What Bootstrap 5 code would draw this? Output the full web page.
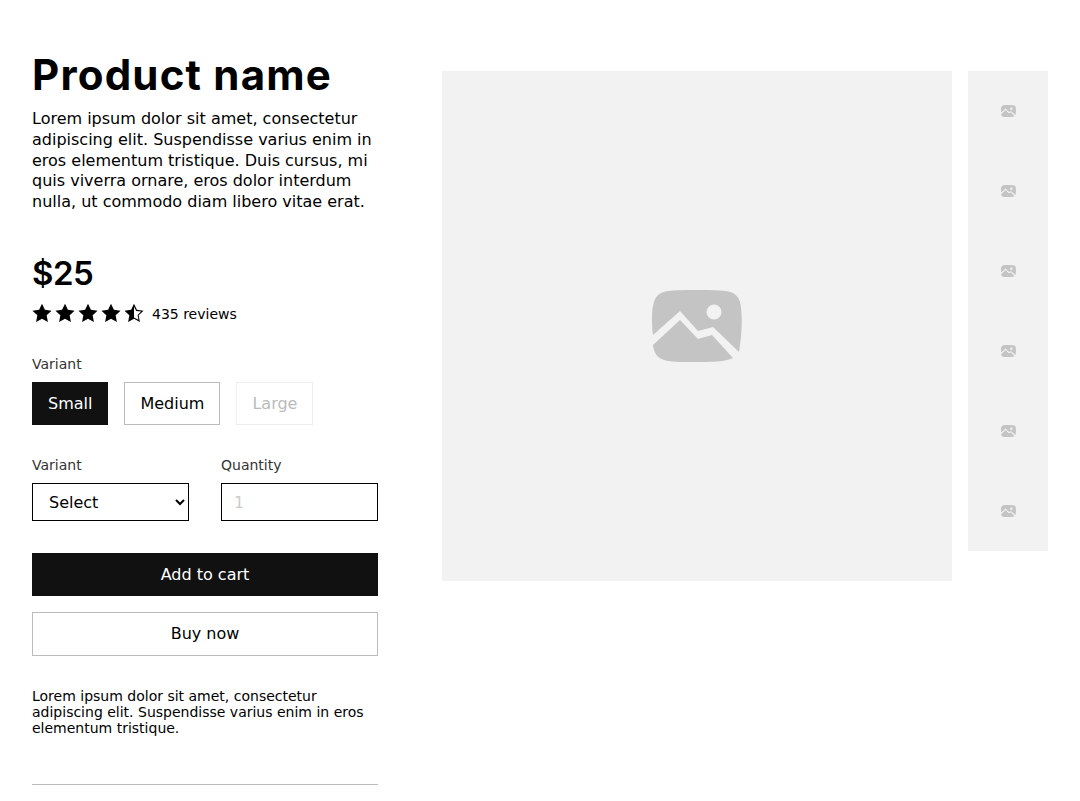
<!DOCTYPE html>
<html lang="en">
<head>
  <meta charset="UTF-8" />
  <meta name="viewport" content="width=device-width, initial-scale=1.0"/>
  <title>Product name</title>
  <link rel="stylesheet" href="https://cdn.jsdelivr.net/npm/bootstrap@5.3.0/dist/css/bootstrap.min.css"/>
  <style>
    body {
      font-family: "DejaVu Sans", sans-serif;
      color: #000;
      background: #fff;
      overflow: hidden;
    }
    .product-page {
      padding: 49px 32px 0;
      gap: 64px;
    }
    .info-col {
      width: 346px;
      flex: none;
    }
    .product-title {
      font-family: Inter, sans-serif;
      font-weight: 700;
      font-size: 42px;
      letter-spacing: 1.2px;
      line-height: 52px;
      margin-bottom: 8px;
    }
    .product-intro {
      font-size: 16px;
      line-height: 20.8px;
      margin-bottom: 39px;
    }
    .product-price {
      font-family: Inter, sans-serif;
      font-weight: 600;
      font-size: 33px;
      letter-spacing: -.5px;
      line-height: 42px;
      margin-bottom: 9px;
    }
    .star-row {
      gap: 3px;
      margin-bottom: 31px;
    }
    .review-count {
      font-size: 14px;
      line-height: 19px;
      margin-left: 5px;
      padding-top: 2px;
    }
    .field-label {
      font-size: 14px;
      line-height: 18.2px;
      color: #333;
      margin-bottom: 9px;
      display: block;
    }
    .variant-btn {
      font-size: 16px;
      line-height: 20.8px;
      padding: 11px 15px 9px;
      border-radius: 0;
      border: 1px solid #bbb;
      background: #fff;
      color: #000;
    }
    .variant-btn.is-selected {
      background: #111;
      border-color: #111;
      color: #fff;
    }
    .variant-btn.is-off {
      border-color: #eee;
      color: #bbb;
      opacity: 1;
    }
    .field-input {
      height: 38px;
      font-size: 16px;
      border-radius: 0;
      border: 1px solid #000;
      color: #000;
      background: #fff;
      padding: 6px 12px;
    }
    .field-input::placeholder {
      color: #ccc;
    }
    .field-pair {
      margin-bottom: 32px;
    }
    .field-half {
      width: 157px;
    }
    .variant-group {
      margin-bottom: 31px;
    }
    .action-btn {
      font-size: 16px;
      line-height: 20.8px;
      padding: 10px 16px;
      border-radius: 0;
    }
    .btn-dark-solid {
      background: #111;
      border: 1px solid #111;
      color: #fff;
      padding-top: 11px;
      padding-bottom: 9px;
    }
    .btn-plain {
      background: #fff;
      border: 1px solid #bbb;
      color: #000;
      line-height: 21.8px;
    }
    .small-note {
      font-size: 14px;
      line-height: 16px;
      margin: 32px 0 48px;
    }
    .info-rule {
      border: 0;
      border-top: 1px solid #bbb;
      opacity: 1;
      margin: 0;
    }
    .gallery {
      margin-top: 22px;
      gap: 16px;
    }
    .main-shot {
      width: 510px;
      height: 510px;
      background: #f2f2f3;
    }
    .thumb-strip {
      width: 80px;
    }
    .thumb-shot {
      width: 80px;
      height: 80px;
      background: #f2f2f3;
    }
  </style>
</head>
<body>
  <svg width="0" height="0" class="position-absolute">
    <defs>
      <symbol id="placeholder" viewBox="0 0 90 72">
        <path fill="#c4c4c4" fill-rule="evenodd" d="M1 45C-1 30 0 18 2 12 4 5 9 2 16 1 35 -.5 55 -.5 74 1 81 2 86 5 88 12 90 20 91 38 87 62L61 37 46 41 28 21ZM1 55 28 30 46 49 60 45 81 68C77 70 72 71 65 71.500 48 72.500 32 72.500 20 71.500 8 70.500 2 66 1 55ZM62 14.500A7.500 7.500 0 1 0 62 29.500 7.500 7.500 0 1 0 62 14.500Z"/>
      </symbol>
      <symbol id="star" viewBox="0 0 18 18">
        <path d="M9 .6 11.600 6.100 17.600 6.900 13.200 11.100 14.300 17.100 9 14.200 3.700 17.100 4.800 11.100 .4 6.900 6.400 6.100Z"/>
      </symbol>
      <symbol id="star-half" viewBox="0 0 18 18">
        <path fill-rule="evenodd" d="M9 .6 11.600 6.100 17.600 6.900 13.200 11.100 14.300 17.100 9 14.200 3.700 17.100 4.800 11.100 .4 6.900 6.400 6.100ZM9 3.400V13L13 15 12.200 10.700 15.400 7.700 11 7.100Z"/>
      </symbol>
    </defs>
  </svg>

  <div class="product-page d-flex align-items-start">
    <div class="info-col">
      <h1 class="product-title">Product name</h1>
      <p class="product-intro">Lorem ipsum dolor sit amet, consectetur adipiscing elit. Suspendisse varius enim in eros elementum tristique. Duis cursus, mi quis viverra ornare, eros dolor interdum nulla, ut commodo diam libero vitae erat.</p>

      <div class="product-price">$25</div>
      <div class="d-flex align-items-center star-row">
        <svg width="20" height="20"><use href="#star"/></svg>
        <svg width="20" height="20"><use href="#star"/></svg>
        <svg width="20" height="20"><use href="#star"/></svg>
        <svg width="20" height="20"><use href="#star"/></svg>
        <svg width="20" height="20"><use href="#star-half"/></svg>
        <span class="review-count">435 reviews</span>
      </div>

      <div class="variant-group">
        <span class="field-label">Variant</span>
        <div class="d-flex gap-3">
          <button type="button" class="btn variant-btn is-selected">Small</button>
          <button type="button" class="btn variant-btn">Medium</button>
          <button type="button" class="btn variant-btn is-off" disabled>Large</button>
        </div>
      </div>

      <div class="field-pair d-flex justify-content-between">
        <div class="field-half">
          <label class="field-label" for="variantSelect">Variant</label>
          <select id="variantSelect" class="field-input w-100">
            <option>Select</option>
          </select>
        </div>
        <div class="field-half">
          <label class="field-label" for="quantityInput">Quantity</label>
          <input id="quantityInput" type="number" class="form-control field-input w-100" placeholder="1">
        </div>
      </div>

      <div class="d-grid gap-3">
        <button type="button" class="btn action-btn btn-dark-solid">Add to cart</button>
        <button type="button" class="btn action-btn btn-plain">Buy now</button>
      </div>

      <p class="small-note">Lorem ipsum dolor sit amet, consectetur adipiscing elit. Suspendisse varius enim in eros elementum tristique.</p>
      <hr class="info-rule">
    </div>

    <div class="gallery d-flex align-items-start">
      <div class="main-shot d-flex align-items-center justify-content-center">
        <svg width="90" height="72"><use href="#placeholder"/></svg>
      </div>
      <div class="thumb-strip d-flex flex-column">
        <div class="thumb-shot d-flex align-items-center justify-content-center"><svg width="15" height="12"><use href="#placeholder"/></svg></div>
        <div class="thumb-shot d-flex align-items-center justify-content-center"><svg width="15" height="12"><use href="#placeholder"/></svg></div>
        <div class="thumb-shot d-flex align-items-center justify-content-center"><svg width="15" height="12"><use href="#placeholder"/></svg></div>
        <div class="thumb-shot d-flex align-items-center justify-content-center"><svg width="15" height="12"><use href="#placeholder"/></svg></div>
        <div class="thumb-shot d-flex align-items-center justify-content-center"><svg width="15" height="12"><use href="#placeholder"/></svg></div>
        <div class="thumb-shot d-flex align-items-center justify-content-center"><svg width="15" height="12"><use href="#placeholder"/></svg></div>
      </div>
    </div>
  </div>

  <script src="https://cdn.jsdelivr.net/npm/bootstrap@5.3.0/dist/js/bootstrap.bundle.min.js"></script>
</body>
</html>
